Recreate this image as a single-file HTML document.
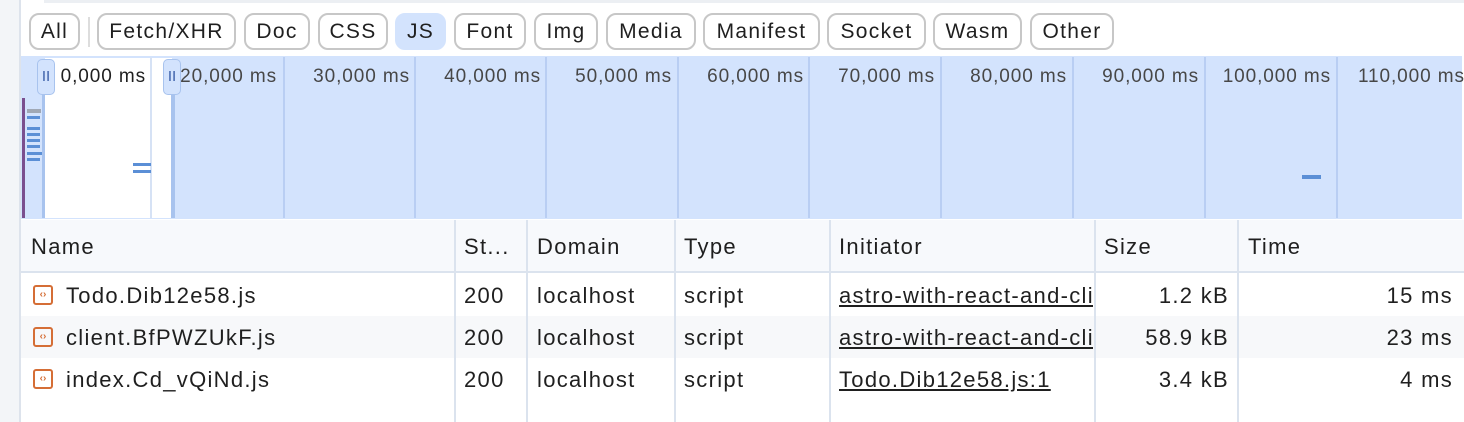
<!DOCTYPE html>
<html><head><style>
*{margin:0;padding:0;box-sizing:border-box}
body{width:1464px;height:422px;overflow:hidden;background:#fff;font-family:"Liberation Sans",Helvetica,sans-serif;color:#1f1f1f;position:relative}
.abs{position:absolute}
.btn{position:absolute;top:13px;height:37px;border:2px solid #c7c7c7;border-radius:10px;font-size:21px;letter-spacing:1.3px;line-height:33px;text-align:center;color:#1f1f1f;background:#fff;white-space:nowrap}
.grid{position:absolute;top:57px;width:2px;height:161px;background:#b9cef3}
.lbl{position:absolute;top:66px;font-size:19px;letter-spacing:0.9px;color:#474747;text-align:right;width:150px;white-space:nowrap}
.vl{position:absolute;top:220px;width:2px;height:202px;background:#dbe3ee}
.cell{position:absolute;font-size:22px;letter-spacing:1.3px;line-height:42px;white-space:nowrap}
.ico{position:absolute;left:33px;width:20px;height:20px;border:2px solid #d56e36;border-radius:3px;font-size:10px;color:#d56e36;text-align:center;line-height:15px;font-weight:bold}
</style></head><body>
<div class="abs" style="left:0;top:0;width:19px;height:422px;background:#f3f5f8"></div>
<div class="abs" style="left:19px;top:0;width:2px;height:422px;background:#dde3ec"></div>
<div class="abs" style="left:44px;top:0;width:1420px;height:3px;background:#eceff3"></div>

<div class="btn" style="left:29px;width:51px">All</div>
<div class="abs" style="left:88px;top:17px;width:2px;height:30px;background:#ddd"></div>
<div class="btn" style="left:97px;width:139px">Fetch/XHR</div>
<div class="btn" style="left:244px;width:66px">Doc</div>
<div class="btn" style="left:318px;width:70px">CSS</div>
<div class="btn" style="left:395px;width:51px;background:#d3e3fd;border-color:#d3e3fd">JS</div>
<div class="btn" style="left:454px;width:72px">Font</div>
<div class="btn" style="left:534px;width:64px">Img</div>
<div class="btn" style="left:606px;width:90px">Media</div>
<div class="btn" style="left:703px;width:117px">Manifest</div>
<div class="btn" style="left:827px;width:99px">Socket</div>
<div class="btn" style="left:933px;width:89px">Wasm</div>
<div class="btn" style="left:1030px;width:84px">Other</div>

<div class="abs" style="left:21px;top:56px;width:1441px;height:163px;background:#d3e3fd"></div>
<div class="abs" style="left:45px;top:58px;width:127px;height:160px;background:#fff"></div>
<div class="grid" style="left:150px;background:#d6e2f5"></div>
<div class="grid" style="left:283px"></div><div class="grid" style="left:414px"></div><div class="grid" style="left:545px"></div><div class="grid" style="left:677px"></div><div class="grid" style="left:808px"></div><div class="grid" style="left:940px"></div><div class="grid" style="left:1072px"></div><div class="grid" style="left:1204px"></div><div class="grid" style="left:1336px"></div>
<div class="abs" style="left:42px;top:92px;width:3px;height:126px;background:#a8c3ee"></div>
<div class="abs" style="left:171px;top:92px;width:4px;height:126px;background:#a8c3ee"></div>
<div class="lbl" style="left:-4px;color:#1f1f1f">0,000 ms</div>
<div class="lbl" style="left:127px">20,000 ms</div>
<div class="lbl" style="left:260px">30,000 ms</div>
<div class="lbl" style="left:391px">40,000 ms</div>
<div class="lbl" style="left:522px">50,000 ms</div>
<div class="lbl" style="left:654px">60,000 ms</div>
<div class="lbl" style="left:785px">70,000 ms</div>
<div class="lbl" style="left:917px">80,000 ms</div>
<div class="lbl" style="left:1049px">90,000 ms</div>
<div class="lbl" style="left:1181px">100,000 ms</div>
<div class="lbl" style="left:1358px;text-align:left">110,000 ms</div>
<div class="abs" style="left:37px;top:59px;width:18px;height:36px;background:#d3e3fd;border:1px solid #a8c3ee;border-radius:5px;color:#3a5ea8;font-size:15px;text-align:center;line-height:34px">II</div>
<div class="abs" style="left:163px;top:59px;width:18px;height:36px;background:#d3e3fd;border:1px solid #a8c3ee;border-radius:5px;color:#3a5ea8;font-size:15px;text-align:center;line-height:34px">II</div>
<div class="abs" style="left:22px;top:98px;width:3px;height:120px;background:#7a4f8f"></div>
<div class="abs" style="left:27px;top:109px;width:14px;height:4px;background:#a0a8b5"></div>
<div class="abs" style="left:27px;top:116px;width:13px;height:3px;background:#5b8fd6"></div>
<div class="abs" style="left:27px;top:127px;width:13px;height:3px;background:#5b8fd6"></div>
<div class="abs" style="left:27px;top:133px;width:13px;height:3px;background:#5b8fd6"></div>
<div class="abs" style="left:27px;top:139px;width:13px;height:3px;background:#5b8fd6"></div>
<div class="abs" style="left:27px;top:145px;width:13px;height:3px;background:#5b8fd6"></div>
<div class="abs" style="left:27px;top:152px;width:15px;height:3px;background:#5b8fd6"></div>
<div class="abs" style="left:27px;top:158px;width:13px;height:3px;background:#5b8fd6"></div>
<div class="abs" style="left:133px;top:163px;width:18px;height:3px;background:#5b8fd6"></div>
<div class="abs" style="left:133px;top:170px;width:18px;height:3px;background:#5b8fd6"></div>
<div class="abs" style="left:1302px;top:175px;width:19px;height:4px;background:#5b8fd6"></div>

<div class="abs" style="left:21px;top:220px;width:1443px;height:52px;background:#f7f9fc"></div>
<div class="abs" style="left:21px;top:271px;width:1443px;height:2px;background:#dbe3ee"></div>
<div class="abs" style="left:21px;top:316px;width:1443px;height:42px;background:#f7f8fa"></div>
<div class="vl" style="left:454px"></div><div class="vl" style="left:526px"></div><div class="vl" style="left:674px"></div><div class="vl" style="left:829px"></div><div class="vl" style="left:1094px"></div><div class="vl" style="left:1237px"></div>

<div class="cell" style="left:31px;top:226px">Name</div>
<div class="cell" style="left:464px;top:226px">St...</div>
<div class="cell" style="left:537px;top:226px">Domain</div>
<div class="cell" style="left:684px;top:226px">Type</div>
<div class="cell" style="left:839px;top:226px">Initiator</div>
<div class="cell" style="left:1104px;top:226px">Size</div>
<div class="cell" style="left:1248px;top:226px">Time</div>

<div class="ico" style="top:285px">‹›</div>
<div class="cell" style="left:66px;top:275px">Todo.Dib12e58.js</div>
<div class="cell" style="left:464px;top:275px">200</div>
<div class="cell" style="left:537px;top:275px">localhost</div>
<div class="cell" style="left:684px;top:275px">script</div>
<div class="cell" style="left:839px;top:275px;width:254px;overflow:hidden;text-decoration:underline">astro-with-react-and-client</div>
<div class="cell" style="left:1100px;top:275px;width:129px;text-align:right">1.2 kB</div>
<div class="cell" style="left:1250px;top:275px;width:203px;text-align:right">15 ms</div>

<div class="ico" style="top:327px">‹›</div>
<div class="cell" style="left:66px;top:317px">client.BfPWZUkF.js</div>
<div class="cell" style="left:464px;top:317px">200</div>
<div class="cell" style="left:537px;top:317px">localhost</div>
<div class="cell" style="left:684px;top:317px">script</div>
<div class="cell" style="left:839px;top:317px;width:254px;overflow:hidden;text-decoration:underline">astro-with-react-and-client</div>
<div class="cell" style="left:1100px;top:317px;width:129px;text-align:right">58.9 kB</div>
<div class="cell" style="left:1250px;top:317px;width:203px;text-align:right">23 ms</div>

<div class="ico" style="top:369px">‹›</div>
<div class="cell" style="left:66px;top:359px">index.Cd_vQiNd.js</div>
<div class="cell" style="left:464px;top:359px">200</div>
<div class="cell" style="left:537px;top:359px">localhost</div>
<div class="cell" style="left:684px;top:359px">script</div>
<div class="cell" style="left:839px;top:359px;text-decoration:underline">Todo.Dib12e58.js:1</div>
<div class="cell" style="left:1100px;top:359px;width:129px;text-align:right">3.4 kB</div>
<div class="cell" style="left:1250px;top:359px;width:203px;text-align:right">4 ms</div>
</body></html>
